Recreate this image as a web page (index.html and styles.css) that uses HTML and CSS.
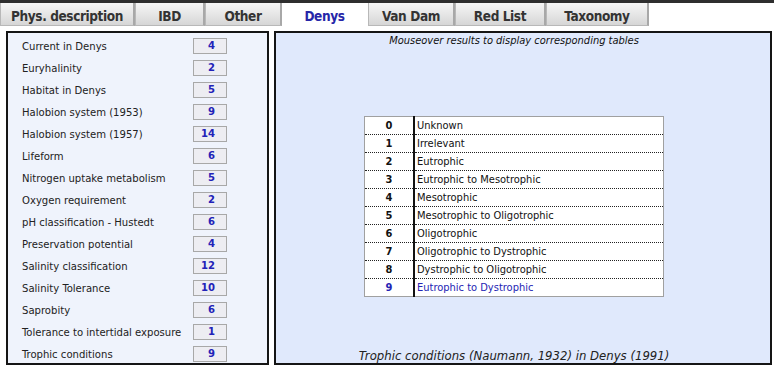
FILE: index.html
```html
<!DOCTYPE html>
<html lang="en">
<head>
    <meta charset="UTF-8">
    <title>Denys - Ecology</title>
    <link rel="stylesheet" href="styles.css">
</head>
<body>

    <div class="topbar"></div>

    <!-- Tabs -->
    <div class="tabs">
        <div class="tab">Phys. description</div>
        <div class="tab">IBD</div>
        <div class="tab">Other</div>
        <div class="tab active">Denys</div>
        <div class="tab">Van Dam</div>
        <div class="tab">Red List</div>
        <div class="tab">Taxonomy</div>
    </div>

    <div class="main">
        <div class="list-panel">
            <div class="row"><span>Current in Denys</span><span class="val">4</span></div>
            <div class="row"><span>Euryhalinity</span><span class="val">2</span></div>
            <div class="row"><span>Habitat in Denys</span><span class="val">5</span></div>
            <div class="row"><span>Halobion system (1953)</span><span class="val">9</span></div>
            <div class="row"><span>Halobion system (1957)</span><span class="val">14</span></div>
            <div class="row"><span>Lifeform</span><span class="val">6</span></div>
            <div class="row"><span>Nitrogen uptake metabolism</span><span class="val">5</span></div>
            <div class="row"><span>Oxygen requirement</span><span class="val">2</span></div>
            <div class="row"><span>pH classification - Hustedt</span><span class="val">6</span></div>
            <div class="row"><span>Preservation potential</span><span class="val">4</span></div>
            <div class="row"><span>Salinity classification</span><span class="val">12</span></div>
            <div class="row"><span>Salinity Tolerance</span><span class="val">10</span></div>
            <div class="row"><span>Saprobity</span><span class="val">6</span></div>
            <div class="row"><span>Tolerance to intertidal exposure</span><span class="val">1</span></div>
            <div class="row"><span>Trophic conditions</span><span class="val">9</span></div>
        </div>

        <div class="results-panel">
            <p class="hint">Mouseover results to display corresponding tables</p>

            <table class="codes">
                <tr><td class="code">0</td><td>Unknown</td></tr>
                <tr><td class="code">1</td><td>Irrelevant</td></tr>
                <tr><td class="code">2</td><td>Eutrophic</td></tr>
                <tr><td class="code">3</td><td>Eutrophic to Mesotrophic</td></tr>
                <tr><td class="code">4</td><td>Mesotrophic</td></tr>
                <tr><td class="code">5</td><td>Mesotrophic to Oligotrophic</td></tr>
                <tr><td class="code">6</td><td>Oligotrophic</td></tr>
                <tr><td class="code">7</td><td>Oligotrophic to Dystrophic</td></tr>
                <tr><td class="code">8</td><td>Dystrophic to Oligotrophic</td></tr>
                <tr class="selected"><td class="code">9</td><td>Eutrophic to Dystrophic</td></tr>
            </table>

            <p class="caption">Trophic conditions (Naumann, 1932) in Denys (1991)</p>
        </div>
    </div>

</body>
</html>
```

FILE: styles.css
```css
body {
    margin: 0;
    font-family: "DejaVu Sans Condensed", "DejaVu Sans", sans-serif;
    font-size: 11px;
    color: #222;
    background-color: white;
    overflow: hidden;
}

.topbar {
    height: 3px;
    background-color: #2e2e2e;
}

/* Tab strip */
.tabs {
    display: flex;
    height: 23px;
}
.tab {
    box-sizing: border-box;
    height: 23px;
    padding-top: 3px;
    line-height: 20px;
    text-align: center;
    font-size: 13.5px;
    font-weight: bold;
    letter-spacing: -0.4px;
    color: #333;
    background: linear-gradient(#f6f6f6, #d6d6d6);
    border: 1px solid #b8b8b8;
    border-top: none;
    border-right: 2px solid #a8a8a8;
}
.tab:nth-child(1) { width: 135px; }
.tab:nth-child(2) { width: 70px; }
.tab:nth-child(3) { width: 77px; }
.tab:nth-child(4) { width: 86px; }
.tab:nth-child(5) { width: 87px; }
.tab:nth-child(6) { width: 91px; }
.tab:nth-child(7) { width: 103px; }
.tab.active {
    background: white;
    color: #2626a8;
    border-color: white;
}

.main {
    display: flex;
    gap: 5px;
    margin-top: 5px;
    padding-left: 6px;
}

/* Left list of classifications */
.list-panel {
    box-sizing: border-box;
    width: 263px;
    height: 334px;
    padding: 2px 0 0 14px;
    background-color: #eff3fc;
    border: 2px solid #151515;
}
.row {
    display: flex;
    align-items: center;
    height: 22px;
    font-size: 11.2px;
}
.row span:first-child {
    width: 171px;
}
.val {
    box-sizing: border-box;
    width: 34px;
    height: 16px;
    line-height: 14px;
    padding-right: 11px;
    text-align: right;
    font-weight: bold;
    color: #2222b8;
    background-color: #ededf2;
    border: 1px solid #a8a8a8;
}

/* Right results area */
.results-panel {
    box-sizing: border-box;
    width: 498px;
    height: 334px;
    padding-right: 18px;
    display: flex;
    flex-direction: column;
    align-items: center;
    background-color: #e0e9fc;
    border: 2px solid #151515;
}
.hint {
    margin: 1px 0 0;
    font-style: italic;
    color: #111;
}
.codes {
    margin-top: 69px;
    width: 300px;
    border-collapse: collapse;
    background-color: white;
    border: 1px solid #a0a0a0;
    color: #111;
}
.codes td {
    height: 17px;
    padding: 0 0 0 2px;
    border-bottom: 1px dotted #222;
    line-height: 15px;
}
.codes td.code {
    width: 48px;
    padding: 0;
    text-align: center;
    font-weight: bold;
    border-right: 2px solid #111;
}
.codes tr.selected td {
    color: #2424b4;
}
.caption {
    margin: auto 0 0;
    font-size: 13px;
    font-style: italic;
    color: #222;
}
```
